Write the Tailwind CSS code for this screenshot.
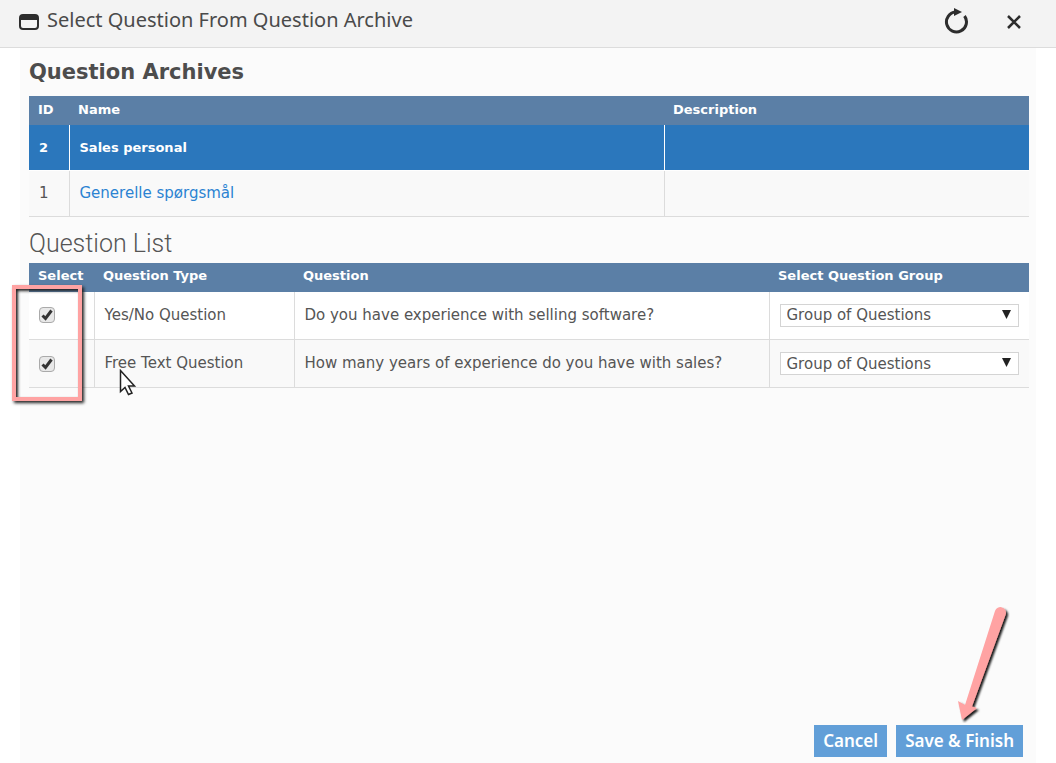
<!DOCTYPE html>
<html lang="en">
  <head>
    <meta charset="UTF-8" />
    <meta name="viewport" content="width=device-width, initial-scale=1.0" />
    <title>Select Question From Question Archive</title>
    <script src="https://cdn.jsdelivr.net/npm/@tailwindcss/browser@4"></script>
  </head>

  <body class="min-h-screen flex flex-col bg-white font-['DejaVu_Sans',sans-serif] text-[15px] text-[#555]">
    <!-- Title bar -->
    <header class="h-12 flex items-center pl-[19px] pr-8 pb-1 bg-[#f3f3f3] border-b border-[#dcdcdc]">
      <svg class="w-5 h-4 mr-2" viewBox="0 0 20 16" fill="none" aria-hidden="true">
        <rect x="1" y="1" width="18" height="14" rx="3" stroke="#2d2d2d" stroke-width="2" />
        <path d="M1 6V4a3 3 0 0 1 3-3h12a3 3 0 0 1 3 3v2z" fill="#2d2d2d" />
      </svg>
      <h1 class="flex-1 pb-1 font-['Noto_Sans',sans-serif] text-[20px] leading-6 text-[#4a4a4a]">Select Question From Question Archive</h1>
      <button type="button" aria-label="Reload" class="mr-9 pb-1">
        <svg class="w-6 h-7" viewBox="0 0 24 28" fill="none">
          <path d="M20.500 10A10 10 0 1 1 11.500 6" stroke="#2d2d2d" stroke-width="3" />
          <path d="M10 2l8 4-8 4z" fill="#2d2d2d" />
        </svg>
      </button>
      <button type="button" aria-label="Close">
        <svg class="w-5 h-5" viewBox="0 0 20 20" fill="none">
          <path d="M4 4l12 12M16 4L4 16" stroke="#2d2d2d" stroke-width="2.500" />
        </svg>
      </button>
    </header>

    <main class="flex-1 flex flex-col ml-5 mr-5 pl-[9px] pr-[7px] bg-[#fbfbfb]">
      <!-- Archives -->
      <h2 class="pt-2 h-12 text-[21px] leading-8 font-bold text-[#4d4d4d]">Question Archives</h2>
      <table class="w-full table-fixed border-collapse">
        <colgroup>
          <col class="w-[4%]" />
          <col class="w-[59.5%]" />
          <col />
        </colgroup>
        <thead>
          <tr class="h-[29px] bg-[#5b7fa6] text-left text-[13px] leading-4 text-white">
            <th class="pl-[9px] pb-[2px]">ID</th>
            <th class="pl-[9px] pb-[2px]">Name</th>
            <th class="pl-[9px] pb-[2px]">Description</th>
          </tr>
        </thead>
        <tbody>
          <tr class="h-[45px] bg-[#2b77bc] text-[13px] text-white font-bold border-b border-white">
            <td class="pl-[10px] border-r border-white">2</td>
            <td class="pl-[10px] border-r border-white">Sales personal</td>
            <td></td>
          </tr>
          <tr class="h-[46px] bg-[#f9f9f9] border-b border-[#dcdcdc]">
            <td class="pl-[10px] border-r border-[#dcdcdc]">1</td>
            <td class="pl-[10px] border-r border-[#dcdcdc]"><a href="#" class="text-[#2b83d2]">Generelle spørgsmål</a></td>
            <td></td>
          </tr>
        </tbody>
      </table>

      <!-- Questions -->
      <h2 class="pt-[11px] h-[46px] font-[Roboto,sans-serif] font-light text-[25px] leading-8 text-[#555]">Question List</h2>
      <section class="relative">
        <table class="w-full table-fixed border-collapse">
          <colgroup>
            <col class="w-[6.5%]" />
            <col class="w-[20%]" />
            <col class="w-[47.5%]" />
            <col />
          </colgroup>
          <thead>
            <tr class="h-[29px] bg-[#5b7fa6] text-left text-[13px] leading-4 text-white">
              <th class="pl-[9px] pb-[2px]">Select</th>
              <th class="pl-[9px] pb-[2px]">Question Type</th>
              <th class="pl-[9px] pb-[2px]">Question</th>
              <th class="pl-[9px] pb-[2px]">Select Question Group</th>
            </tr>
          </thead>
          <tbody>
            <tr class="h-12 bg-white border-b border-[#dcdcdc]">
              <td class="pl-[10px] border-r border-[#dcdcdc]">
                <label class="grid w-4 h-4">
                  <input type="checkbox" checked aria-label="Select Yes/No Question" class="col-start-1 row-start-1 appearance-none w-4 h-4 rounded-sm border border-[#aaa] bg-[#e8e8e8]" />
                  <svg class="col-start-1 row-start-1 w-4 h-4 pointer-events-none" viewBox="0 0 16 16" fill="none">
                    <path d="M3.500 8.500l3 3 6-8" stroke="#333" stroke-width="3" />
                  </svg>
                </label>
              </td>
              <td class="pl-[10px] border-r border-[#dcdcdc]">Yes/No Question</td>
              <td class="pl-[10px] border-r border-[#dcdcdc]">Do you have experience with selling software?</td>
              <td class="px-[10px]">
                <div class="relative">
                  <select aria-label="Group for Yes/No Question" class="block w-full h-[23px] appearance-none border border-[#d4d4d4] bg-white pl-[6px] leading-5">
                    <option>Group of Questions</option>
                  </select>
                  <svg class="absolute right-2 top-[6px] w-[9px] h-[9px] pointer-events-none" viewBox="0 0 8 8"><path d="M0 0h8L4 8z" fill="#222" /></svg>
                </div>
              </td>
            </tr>
            <tr class="h-12 bg-[#f9f9f9] border-b border-[#dcdcdc]">
              <td class="pl-[10px] border-r border-[#dcdcdc]">
                <label class="grid w-4 h-4">
                  <input type="checkbox" checked aria-label="Select Free Text Question" class="col-start-1 row-start-1 appearance-none w-4 h-4 rounded-sm border border-[#aaa] bg-[#e8e8e8]" />
                  <svg class="col-start-1 row-start-1 w-4 h-4 pointer-events-none" viewBox="0 0 16 16" fill="none">
                    <path d="M3.500 8.500l3 3 6-8" stroke="#333" stroke-width="3" />
                  </svg>
                </label>
              </td>
              <td class="pl-[10px] border-r border-[#dcdcdc]">Free Text Question</td>
              <td class="pl-[10px] border-r border-[#dcdcdc]">How many years of experience do you have with sales?</td>
              <td class="px-[10px]">
                <div class="relative">
                  <select aria-label="Group for Free Text Question" class="block w-full h-[23px] appearance-none border border-[#d4d4d4] bg-white pl-[6px] leading-5">
                    <option>Group of Questions</option>
                  </select>
                  <svg class="absolute right-2 top-[6px] w-[9px] h-[9px] pointer-events-none" viewBox="0 0 8 8"><path d="M0 0h8L4 8z" fill="#222" /></svg>
                </div>
              </td>
            </tr>
          </tbody>
        </table>

        <!-- Highlight around the tick boxes -->
        <div class="absolute -left-[17px] top-[22px] w-[70px] h-[116px] border-4 border-[#ffa3a3] shadow-[2px_2px_3px_#222,inset_2px_2px_3px_#222] pointer-events-none"></div>

        <!-- Mouse pointer -->
        <svg class="absolute left-[90px] top-[106px] w-[18px] h-7 pointer-events-none" viewBox="0 0 18 28">
          <path d="M1.500 1.500v21l4.500-4 3.500 7 3.500-1.500-3.500-7h6z" fill="#fff" stroke="#222" stroke-width="1.500" />
        </svg>
      </section>

      <!-- Actions -->
      <footer class="mt-auto flex justify-end gap-[9px] pr-[6px] pb-[6px] pt-6 font-['Noto_Sans',sans-serif] font-semibold text-[17px] leading-8 text-white">
        <button type="button" class="h-8 px-[9px] bg-[#629fd8]">Cancel</button>
        <div class="relative">
          <button type="button" class="h-8 px-[9px] bg-[#629fd8]">Save &amp; Finish</button>
          <svg class="absolute right-3 bottom-[34px] w-[56px] h-[120px] pointer-events-none" viewBox="0 0 56 120">
            <defs>
              <filter id="arrow-shadow" x="-20%" y="-20%" width="150%" height="150%">
                <feDropShadow dx="2" dy="2" stdDeviation="1" flood-color="#000" flood-opacity="0.900" />
              </filter>
            </defs>
            <path d="M40 8a5.500 5.500 0 0 1 10.700 3.500L17 103.500l5 1.500L7 117 3 98l7 4z" fill="#ffa3a3" filter="url(#arrow-shadow)" />
          </svg>
        </div>
      </footer>
    </main>
  </body>
</html>
